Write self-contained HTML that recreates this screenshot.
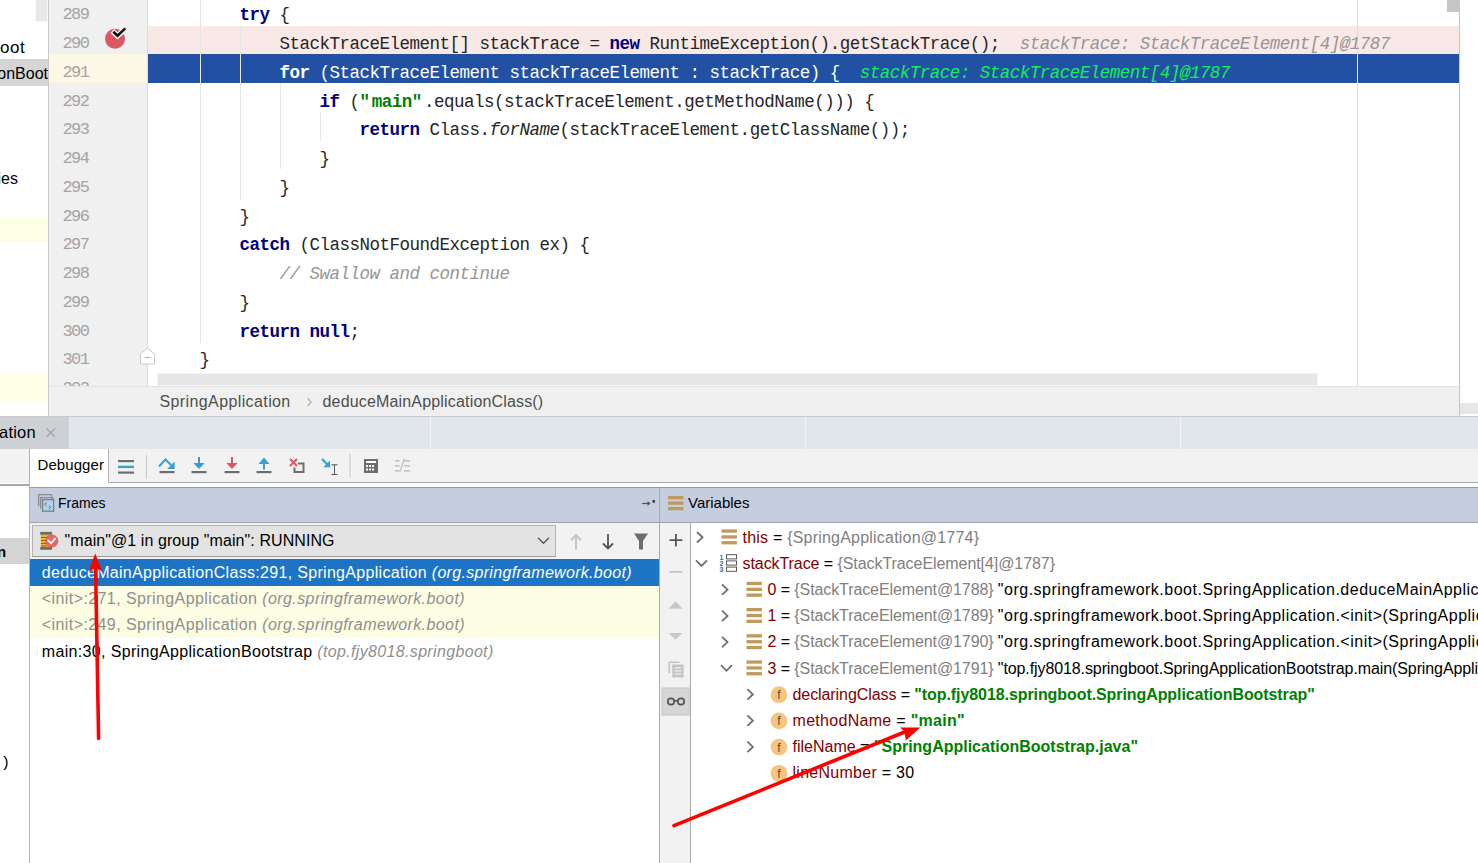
<!DOCTYPE html>
<html><head><meta charset="utf-8">
<style>
*{margin:0;padding:0;box-sizing:border-box}
html,body{width:1478px;height:863px;overflow:hidden;background:#fff;font-family:"Liberation Sans",sans-serif}
.a{position:absolute}
.code{font-family:"Liberation Mono",monospace;font-size:16.67px;white-space:pre;color:#000}
.ln{font-family:"Liberation Mono",monospace;font-size:15px;color:#999;white-space:pre}
.kw{color:#000080;font-weight:bold}
.str{color:#008000;font-weight:bold}
.cm{color:#959595;font-style:italic}
.hint{color:#959595;font-style:italic}
.cl{position:absolute;left:159.5px;height:28.75px;line-height:28.75px;padding-top:4px;font-family:"Liberation Mono",monospace;font-size:17.5px;letter-spacing:-0.5px;white-space:pre;color:#262626}
.cl.sel,.cl.sel b{color:#fff}
.hintg{color:#14ee5a;font-style:italic}
.lnum{position:absolute;left:62.5px;height:28.75px;line-height:28.75px;padding-top:4px;font-family:"Liberation Mono",monospace;font-size:17px;letter-spacing:-1.6px;color:#a4a4a4;white-space:pre}
.ui{font-family:"Liberation Sans",sans-serif;white-space:pre}
</style></head><body>

<!-- left project strip -->
<div class="a" style="left:0;top:0;width:48px;height:416px;background:#fff"></div>
<div class="a" style="left:35px;top:-1px;width:13px;height:22.5px;background:#e8e8e8;border:1px solid #f8f8f8"></div>
<div class="a ui" style="left:0px;top:37.5px;font-size:17px;letter-spacing:0.5px;color:#000">oot</div>
<div class="a" style="left:0;top:59px;width:48px;height:27px;background:#d5d5d5"></div>
<div class="a ui" style="right:1430px;top:65px;font-size:16px;color:#000">ApplicationBoot</div>
<div class="a ui" style="right:1460px;top:170px;font-size:16px;color:#000">Properties</div>
<div class="a" style="left:0;top:217px;width:48px;height:25px;background:#fefee6"></div>
<div class="a" style="left:0;top:373px;width:48px;height:28px;background:#fefee6"></div>

<!-- gutter -->
<div class="a" style="left:48px;top:0;width:1px;height:416px;background:#c9c9c9"></div>
<div class="a" style="left:49px;top:0;width:99px;height:386px;background:#f0f0f0"></div>
<div class="a" style="left:49px;top:54px;width:98px;height:29px;background:#fdf8e3"></div>
<div class="a" style="left:147px;top:0;width:1px;height:386px;background:#dcdcdc"></div>

<!-- editor -->
<div class="a" style="left:148px;top:0;width:1311px;height:386px;background:#fff;overflow:hidden" id="ed">
<div class="a" style="left:0;top:26px;width:1311px;height:28.3px;background:#f9e9e6"></div>
<div class="a" style="left:0;top:54.3px;width:1311px;height:28.5px;background:#2251a4"></div>
<div class="a" style="left:52px;top:0;width:1px;height:343px;background:#e6e6e6"></div>
<div class="a" style="left:92px;top:26px;width:1px;height:174px;background:#e6e6e6"></div>
<div class="a" style="left:132px;top:83px;width:1px;height:86px;background:#e6e6e6"></div>
<div class="a" style="left:172px;top:112px;width:1px;height:29px;background:#e6e6e6"></div>
<div class="a" style="left:52px;top:54.75px;width:1px;height:28.75px;background:#e8ecf4"></div>
<div class="a" style="left:92px;top:54.75px;width:1px;height:28.75px;background:#e8ecf4"></div>
<div class="a" style="left:1209px;top:0;width:1px;height:386px;background:#dddddd"></div>
<div class="a" style="left:1209px;top:54.75px;width:1px;height:28.75px;background:#e8ecf4"></div>
<div class="a" style="left:1299px;top:0;width:12px;height:12px;background:#c6c6c6"></div>
<div class="a" style="left:9px;top:373px;width:1161px;height:13px;background:#e6e6e6;border:1px solid #f4f4f4"></div>
</div>
<div class="a" style="left:0;top:0;width:1478px;height:386px" id="codewrap">
<div class="cl" style="top:-2.75px">        <b class="kw">try</b> {</div>
<div class="lnum" style="top:-2.75px">289</div>
<div class="cl" style="top:26.00px">            StackTraceElement[] stackTrace = <b class="kw">new</b> RuntimeException().getStackTrace();  <i class="hint">stackTrace: StackTraceElement[4]@1787</i></div>
<div class="lnum" style="top:26.00px">290</div>
<div class="cl sel" style="top:54.75px">            <b class="kw">for</b> (StackTraceElement stackTraceElement : stackTrace) {  <i class="hintg">stackTrace: StackTraceElement[4]@1787</i></div>
<div class="lnum" style="top:54.75px">291</div>
<div class="cl" style="top:83.50px">                <b class="kw">if</b> (<b class="str"><span style="letter-spacing:1.75px">"</span>main<span style="letter-spacing:1.75px">"</span></b>.equals(stackTraceElement.getMethodName())) {</div>
<div class="lnum" style="top:83.50px">292</div>
<div class="cl" style="top:112.25px">                    <b class="kw">return</b> Class.<i>forName</i>(stackTraceElement.getClassName());</div>
<div class="lnum" style="top:112.25px">293</div>
<div class="cl" style="top:141.00px">                }</div>
<div class="lnum" style="top:141.00px">294</div>
<div class="cl" style="top:169.75px">            }</div>
<div class="lnum" style="top:169.75px">295</div>
<div class="cl" style="top:198.50px">        }</div>
<div class="lnum" style="top:198.50px">296</div>
<div class="cl" style="top:227.25px">        <b class="kw">catch</b> (ClassNotFoundException ex) {</div>
<div class="lnum" style="top:227.25px">297</div>
<div class="cl" style="top:256.00px">            <i class="cm">// Swallow and continue</i></div>
<div class="lnum" style="top:256.00px">298</div>
<div class="cl" style="top:284.75px">        }</div>
<div class="lnum" style="top:284.75px">299</div>
<div class="cl" style="top:313.50px">        <b class="kw">return</b> <b class="kw">null</b>;</div>
<div class="lnum" style="top:313.50px">300</div>
<div class="cl" style="top:342.25px">    }</div>
<div class="lnum" style="top:342.25px">301</div>
<div class="cl" style="top:371.00px"></div>
<div class="lnum" style="top:371.00px">302</div>
</div>


<svg class="a" style="left:0;top:0" width="1478" height="386" viewBox="0 0 1478 386">
<circle cx="115" cy="38.8" r="10" fill="#db5860"/>
<path d="M112.3 31.1 L117.5 35.9 L126 28" fill="none" stroke="#f2f2f2" stroke-width="5.4" stroke-linejoin="miter" stroke-linecap="butt"/>
<path d="M113.3 31.8 L117.5 35.7 L125.3 28.4" fill="none" stroke="#111" stroke-width="2.6" stroke-linecap="butt"/>
<path d="M147.5 348 L154.5 354 L154.5 364 L140.5 364 L140.5 354 Z" fill="#fff" stroke="#c9c9c9" stroke-width="1"/>
<path d="M144.5 357.5 L150.5 357.5" stroke="#b0b0b0" stroke-width="1"/>
</svg>
<!-- breadcrumb -->
<div class="a" style="left:49px;top:386px;width:1410px;height:30px;background:#f0f0f0;border-top:1px solid #e4e4e4"></div>
<div class="a ui" style="left:159.5px;top:392.26px;font-size:16px;line-height:20px;color:#4e4e4e;letter-spacing:0.39px;">SpringApplication</div>
<svg class="a" style="left:305px;top:396px" width="8" height="12"><path d="M2.5 2 L6 6 L2.5 10" fill="none" stroke="#a0a0a0" stroke-width="1.1"/></svg>
<div class="a ui" style="left:322.5px;top:392.26px;font-size:16px;line-height:20px;color:#4e4e4e;letter-spacing:0.17px;">deduceMainApplicationClass()</div>
<div class="a" style="left:1459px;top:0;width:1px;height:416px;background:#c4c4c4"></div>
<div class="a" style="left:1460px;top:403px;width:18px;height:11px;background:#e6e6e6"></div>
<!-- tabs -->
<div class="a" style="left:49px;top:415px;width:1410px;height:1px;background:#f3f3f3"></div>
<div class="a" style="left:0;top:416px;width:1478px;height:1px;background:#c9c9c9"></div>
<div class="a" style="left:0;top:417px;width:1478px;height:32px;background:#e1e5ec"></div>
<div class="a" style="left:0;top:417px;width:69px;height:32px;background:#cdd0d5"></div>
<div class="a ui" style="left:-1px;top:422.08px;font-size:16.5px;line-height:20px;color:#000;letter-spacing:0.2px;">ation</div>
<svg class="a" style="left:45px;top:427px" width="12" height="12"><path d="M1.5 1.5 L10 10 M10 1.5 L1.5 10" stroke="#a2a2a2" stroke-width="1.2"/></svg>
<div class="a" style="left:430px;top:417px;width:1px;height:32px;background:#f4f5f8"></div>
<div class="a" style="left:1180px;top:417px;width:1px;height:32px;background:#f4f5f8"></div>
<div class="a" style="left:805px;top:417px;width:1px;height:32px;background:#f4f5f8"></div>
<!-- toolbar -->
<div class="a" style="left:0;top:449px;width:1478px;height:34px;background:#f2f2f2"></div>
<div class="a" style="left:0;top:484px;width:29px;height:2px;background:#a8a8a8"></div>
<div class="a" style="left:0;top:486px;width:29px;height:377px;background:#fff"></div>
<div class="a" style="left:30px;top:449px;width:78px;height:38px;background:#fff"></div>
<div class="a" style="left:0;top:538px;width:29px;height:25.5px;background:#d4d4d4"></div>
<div class="a ui" style="left:-3px;top:541.80px;font-size:15px;line-height:20px;color:#000;letter-spacing:0px;font-weight:bold">n</div>
<div class="a ui" style="left:1px;top:753.80px;font-size:15px;line-height:20px;color:#000;letter-spacing:0px;font-family:Liberation Mono">)</div>
<div class="a ui" style="left:37.5px;top:454.80px;font-size:15px;line-height:20px;color:#000;letter-spacing:0.08px;">Debugger</div>
<div class="a" style="left:108px;top:449px;width:1px;height:34px;background:#b4b4b4"></div>
<div class="a" style="left:109px;top:482px;width:1369px;height:1px;background:#a9a9a9"></div>
<div class="a" style="left:109px;top:483px;width:1369px;height:4px;background:#fff"></div>
<div class="a" style="left:29px;top:449px;width:1px;height:414px;background:#b4b4b4"></div>
<svg class="a" style="left:0;top:449px" width="420" height="34" viewBox="0 449 420 34">
<g fill="#6e6e6e"><rect x="118" y="460" width="16" height="2.2"/><rect x="118" y="471.5" width="16" height="2.2"/></g>
<rect x="118" y="465.7" width="16" height="2.4" fill="#389fd6"/>
<rect x="146" y="455" width="1" height="24" fill="#c8c8c8"/>
<g fill="#6e6e6e"><rect x="159.5" y="471" width="15" height="2.2"/><rect x="191.5" y="471" width="15" height="2.2"/><rect x="224.5" y="471" width="15" height="2.2"/><rect x="256.5" y="471" width="15" height="2.2"/></g>
<path d="M159 466.5 L165.5 459.5 L171 465" fill="none" stroke="#389fd6" stroke-width="2"/>
<path d="M174.6 461.5 L174.6 469 L167.2 469 Z" fill="#389fd6"/>
<rect x="198" y="457" width="2" height="7" fill="#389fd6"/><path d="M193.3 463 L204.7 463 L199 469 Z" fill="#389fd6"/>
<rect x="231" y="457" width="2" height="7" fill="#db5860"/><path d="M226.3 463 L237.7 463 L232 469 Z" fill="#db5860"/>
<rect x="263" y="463" width="2" height="6.5" fill="#389fd6"/><path d="M258.5 464 L269.5 464 L264 457.5 Z" fill="#389fd6"/>
<path d="M290 459 L297 466 M297 459 L290 466" stroke="#db5860" stroke-width="2"/>
<path d="M298 463.5 H303.5 V472 H294.5 V467.5" fill="none" stroke="#6e6e6e" stroke-width="2"/>
<path d="M322 459 L328 465" stroke="#389fd6" stroke-width="2.2"/><path d="M330 460.5 L330 467.2 L323.3 467.2 Z" fill="#389fd6"/>
<path d="M331.5 464.8 L337.5 464.8 M334.5 464.8 L334.5 474.5 M331.5 474.5 L337.5 474.5" stroke="#555" stroke-width="1"/>
<rect x="349.5" y="454" width="1" height="24" fill="#c8c8c8"/>
<rect x="364" y="459" width="14" height="14" fill="#6e6e6e"/>
<rect x="366" y="461" width="10" height="2" fill="#fff"/>
<g fill="#fff"><rect x="366" y="465" width="2" height="2"/><rect x="369" y="465" width="2" height="2"/><rect x="372" y="465" width="2" height="2"/><rect x="366" y="468.5" width="2" height="2"/><rect x="369" y="468.5" width="2" height="2"/><rect x="372" y="468.5" width="2" height="2"/></g>
<g fill="#c2c2c2"><rect x="395" y="460" width="4.5" height="1.6"/><rect x="395" y="465" width="4.5" height="1.6"/><rect x="395" y="470" width="4.5" height="1.6"/><rect x="404" y="460" width="6" height="1.6"/><rect x="404" y="465" width="6" height="1.6"/><rect x="404" y="470" width="6" height="1.6"/></g>
<path d="M400 472 L404 459" stroke="#c2c2c2" stroke-width="1.2"/>
</svg>
<!-- panel headers -->
<div class="a" style="left:30px;top:487px;width:1448px;height:1px;background:#9c9c9c"></div>
<div class="a" style="left:30px;top:488px;width:1448px;height:34px;background:#c5cedf"></div>
<div class="a" style="left:30px;top:522px;width:1448px;height:1px;background:#a2a2a2"></div>
<div class="a ui" style="left:58px;top:493.15px;font-size:14px;line-height:20px;color:#000;letter-spacing:0px;">Frames</div>
<div class="a ui" style="left:688px;top:492.60px;font-size:15px;line-height:20px;color:#000;letter-spacing:0px;">Variables</div>
<div class="a" style="left:659px;top:487px;width:1px;height:376px;background:#a9a9a9"></div>
<svg class="a" style="left:0;top:487px" width="700" height="36" viewBox="0 487 700 36">
<path d="M38.6 506 V494.7 H51.5 V497" fill="none" stroke="#8c8c8c" stroke-width="1.3"/>
<path d="M40.6 508.5 V497.7 H52.7 V499.5" fill="none" stroke="#8c8c8c" stroke-width="1.3"/>
<rect x="42.6" y="499.6" width="11" height="11.6" fill="#acd6f0" stroke="#7e7e7e" stroke-width="1.3"/>
<path d="M46.6 502.6 L44.6 504.2 L46.6 505.8 M48.8 505.8 L50.8 507.4 L48.8 509" fill="none" stroke="#666" stroke-width="0.9"/>
<path d="M642 503.5 L650 503.5" stroke="#555" stroke-width="1.2"/><path d="M650.5 503.5 L647.5 501 L647.5 506 Z" fill="#555"/>
<rect x="652.5" y="500" width="2.5" height="2.8" fill="#444"/>
<g fill="#c19a5b"><rect x="668" y="496" width="15.5" height="3.3"/><rect x="668" y="501.5" width="15.5" height="3.3"/><rect x="668" y="507" width="15.5" height="3.3"/></g>
</svg>
<!-- frames -->
<div class="a" style="left:30px;top:523px;width:629px;height:36px;background:#f2f2f2"></div>
<div class="a" style="left:31.5px;top:524.5px;width:524px;height:32.5px;background:#e3e3e3;border:1px solid #b4b4b4;border-bottom-color:#9a9a9a"></div>
<svg class="a" style="left:36px;top:528px" width="620" height="28" viewBox="36 528 620 28">
<rect x="40.8" y="534" width="10" height="13.5" fill="#f0b43c"/>
<g stroke="#8a5a10" stroke-width="0.9"><path d="M41 537.5 H47 M41 540.5 H47 M41 543.5 H47 M41 546 H47"/></g>
<rect x="40.2" y="531.9" width="11.8" height="2.8" fill="#6e6e6e"/><rect x="40.2" y="547" width="11.8" height="2.8" fill="#6e6e6e"/>
<circle cx="51.8" cy="541" r="6.2" fill="#e36b68" stroke="#d9534f" stroke-width="0.6"/>
<path d="M47.6 539.9 L51.1 543.3 L55.5 538.1" fill="none" stroke="#fff" stroke-width="1.7"/>
<path d="M538 537.8 L543.5 543.3 L549 537.8" fill="none" stroke="#555" stroke-width="1.3"/>
<path d="M576 535 V549.5 M571 540 L576 535 L581 540" fill="none" stroke="#c2c2c2" stroke-width="1.8"/>
<path d="M608 534 V548.5 M603 543.5 L608 548.5 L613 543.5" fill="none" stroke="#555" stroke-width="1.8"/>
<path d="M634 533.5 H648 L643 541 V549.5 H639 V541 Z" fill="#6e6e6e"/>
</svg>
<div class="a ui" style="left:64.5px;top:530.96px;font-size:16px;line-height:20px;color:#000;letter-spacing:0.08px;">"main"@1 in group "main": RUNNING</div>
<div class="a" style="left:30px;top:559px;width:629px;height:27px;background:#1e74c4"></div>
<div class="a ui" style="left:41.8px;top:563.06px;font-size:16px;line-height:20px;color:#fff;letter-spacing:0.31px;">deduceMainApplicationClass:291, SpringApplication <i>(org.springframework.boot)</i></div>
<div class="a" style="left:30px;top:586px;width:629px;height:52px;background:#fdfde4"></div>
<div class="a ui" style="left:41.8px;top:589.26px;font-size:16px;line-height:20px;color:#8f8f8f;letter-spacing:0.41px;">&lt;init&gt;:271, SpringApplication <i>(org.springframework.boot)</i></div>
<div class="a ui" style="left:41.8px;top:615.36px;font-size:16px;line-height:20px;color:#8f8f8f;letter-spacing:0.41px;">&lt;init&gt;:249, SpringApplication <i>(org.springframework.boot)</i></div>
<div class="a ui" style="left:41.8px;top:641.86px;font-size:16px;line-height:20px;color:#000;letter-spacing:0.34px;">main:30, SpringApplicationBootstrap <i style="color:#8f8f8f">(top.fjy8018.springboot)</i></div>
<!-- variables -->
<div class="a" style="left:660px;top:523px;width:30px;height:340px;background:#f2f2f2"></div>
<div class="a" style="left:690px;top:523px;width:1px;height:340px;background:#aaaaaa"></div>
<div class="a" style="left:691px;top:523px;width:787px;height:340px;background:#fff"></div>
<svg class="a" style="left:660px;top:523px" width="30" height="200" viewBox="660 523 30 200">
<path d="M669.5 540.2 H682.3 M675.9 533.9 V546.5" stroke="#555" stroke-width="1.8"/>
<path d="M669.5 571.8 H682.3" stroke="#c0c0c0" stroke-width="1.6"/>
<path d="M668.5 608.8 L675.6 601.3 L682.7 608.8 Z" fill="#c8c8c8"/>
<path d="M668.5 633 L675.5 639.5 L682.5 633 Z" fill="#c8c8c8"/>
<path d="M669.3 673 V662.3 H679.5" fill="none" stroke="#c4c4c4" stroke-width="1.6"/>
<rect x="672.3" y="664.5" width="11.3" height="12.9" fill="#c4c4c4"/>
<g fill="#f2f2f2"><rect x="674.5" y="667.3" width="7" height="1.2"/><rect x="674.5" y="670.3" width="7" height="1.2"/><rect x="674.5" y="673.3" width="7" height="1.2"/></g>
<rect x="662" y="688" width="27" height="27" fill="#d6d6d6" stroke="#c4c4c4"/>
<g fill="none" stroke="#555" stroke-width="1.7"><circle cx="671" cy="701.5" r="3.2"/><circle cx="681" cy="701.5" r="3.2"/><path d="M674.2 700.8 H677.8"/></g>
</svg>
<div class="a ui" style="left:742.5px;top:527.66px;font-size:16px;line-height:20px;color:#000;letter-spacing:0.21px;"><span style="color:#800000">this</span> = <span style="color:#808080">{SpringApplication@1774}</span></div>
<div class="a ui" style="left:742.5px;top:553.86px;font-size:16px;line-height:20px;color:#000;letter-spacing:-0.07px;"><span style="color:#800000">stackTrace</span> = <span style="color:#808080">{StackTraceElement[4]@1787}</span></div>
<div class="a ui" style="left:767.6px;top:580.06px;font-size:16px;line-height:20px;color:#000;letter-spacing:-0.1px;"><span style="color:#800000">0</span> = <span style="color:#808080">{StackTraceElement@1788}</span> <span style="letter-spacing:0.5px">"org.springframework.boot.SpringApplication.deduceMainApplicationClass(SpringApplication.java:291)"</span></div>
<div class="a ui" style="left:767.6px;top:606.26px;font-size:16px;line-height:20px;color:#000;letter-spacing:-0.1px;"><span style="color:#800000">1</span> = <span style="color:#808080">{StackTraceElement@1789}</span> <span style="letter-spacing:0.5px">"org.springframework.boot.SpringApplication.&lt;init&gt;(SpringApplication.java:271)"</span></div>
<div class="a ui" style="left:767.6px;top:632.46px;font-size:16px;line-height:20px;color:#000;letter-spacing:-0.1px;"><span style="color:#800000">2</span> = <span style="color:#808080">{StackTraceElement@1790}</span> <span style="letter-spacing:0.5px">"org.springframework.boot.SpringApplication.&lt;init&gt;(SpringApplication.java:249)"</span></div>
<div class="a ui" style="left:767.6px;top:658.66px;font-size:16px;line-height:20px;color:#000;letter-spacing:-0.1px;"><span style="color:#800000">3</span> = <span style="color:#808080">{StackTraceElement@1791}</span> "top.fjy8018.springboot.SpringApplicationBootstrap.main(SpringApplicationBootstrap.java:30)"</div>
<div class="a ui" style="left:792.5px;top:684.86px;font-size:16px;line-height:20px;color:#000;letter-spacing:-0.08px;"><span style="color:#800000">declaringClass</span> = <b style="color:#008000">"top.fjy8018.springboot.SpringApplicationBootstrap"</b></div>
<div class="a ui" style="left:792.5px;top:711.06px;font-size:16px;line-height:20px;color:#000;letter-spacing:0.3px;"><span style="color:#800000">methodName</span> = <b style="color:#008000">"main"</b></div>
<div class="a ui" style="left:792.5px;top:737.26px;font-size:16px;line-height:20px;color:#000;letter-spacing:0.0px;"><span style="color:#800000">fileName</span> = <b style="color:#008000">"SpringApplicationBootstrap.java"</b></div>
<div class="a ui" style="left:792.5px;top:763.46px;font-size:16px;line-height:20px;color:#000;letter-spacing:0.27px;"><span style="color:#800000">lineNumber</span> = 30</div>
<svg class="a" style="left:691px;top:523px" width="787" height="340" viewBox="691 523 787 340">
<path d="M697.0 532.0 L702.5 537.3 L697.0 542.5" fill="none" stroke="#6e6e6e" stroke-width="1.8"/>
<g fill="#c19a5b"><rect x="721.5" y="529.4" width="15.4" height="3.3"/><rect x="721.5" y="535.3" width="15.4" height="3.3"/><rect x="721.5" y="541.1" width="15.4" height="3.3"/></g>
<path d="M696.0 560.4 L701.5 566.0 L707.0 560.4" fill="none" stroke="#6e6e6e" stroke-width="1.8"/>
<g fill="#fff" stroke="#5a5a5a" stroke-width="1"><rect x="726.5" y="554.7" width="10" height="4.2"/><rect x="726.5" y="560.9" width="10" height="4.2"/><rect x="726.5" y="567.1" width="10" height="4.2"/></g>
<text x="719.5" y="559.7" font-family="Liberation Sans" font-size="7" font-weight="bold" fill="#2d6e9e">1</text><text x="719.5" y="565.7" font-family="Liberation Sans" font-size="7" font-weight="bold" fill="#2d6e9e">2</text><text x="719.5" y="571.7" font-family="Liberation Sans" font-size="7" font-weight="bold" fill="#2d6e9e">3</text>
<path d="M722.0 584.4 L727.5 589.7 L722.0 594.9" fill="none" stroke="#6e6e6e" stroke-width="1.8"/>
<g fill="#c19a5b"><rect x="746.5" y="581.8" width="15.4" height="3.3"/><rect x="746.5" y="587.7" width="15.4" height="3.3"/><rect x="746.5" y="593.5" width="15.4" height="3.3"/></g>
<path d="M722.0 610.6 L727.5 615.9 L722.0 621.1" fill="none" stroke="#6e6e6e" stroke-width="1.8"/>
<g fill="#c19a5b"><rect x="746.5" y="608.0" width="15.4" height="3.3"/><rect x="746.5" y="613.9" width="15.4" height="3.3"/><rect x="746.5" y="619.7" width="15.4" height="3.3"/></g>
<path d="M722.0 636.8 L727.5 642.1 L722.0 647.3" fill="none" stroke="#6e6e6e" stroke-width="1.8"/>
<g fill="#c19a5b"><rect x="746.5" y="634.2" width="15.4" height="3.3"/><rect x="746.5" y="640.1" width="15.4" height="3.3"/><rect x="746.5" y="645.9" width="15.4" height="3.3"/></g>
<path d="M721.0 665.2 L726.5 670.8 L732.0 665.2" fill="none" stroke="#6e6e6e" stroke-width="1.8"/>
<g fill="#c19a5b"><rect x="746.5" y="660.4" width="15.4" height="3.3"/><rect x="746.5" y="666.3" width="15.4" height="3.3"/><rect x="746.5" y="672.1" width="15.4" height="3.3"/></g>
<path d="M747.4 689.2 L752.9 694.5 L747.4 699.7" fill="none" stroke="#6e6e6e" stroke-width="1.8"/>
<circle cx="779.0" cy="694.7" r="8.4" fill="#f4c57e"/>
<text x="779.0" y="699.2" text-anchor="middle" font-family="Liberation Sans" font-size="12" fill="#5a4a30">f</text>
<path d="M747.4 715.4 L752.9 720.7 L747.4 725.9" fill="none" stroke="#6e6e6e" stroke-width="1.8"/>
<circle cx="779.0" cy="720.9" r="8.4" fill="#f4c57e"/>
<text x="779.0" y="725.4" text-anchor="middle" font-family="Liberation Sans" font-size="12" fill="#5a4a30">f</text>
<path d="M747.4 741.6 L752.9 746.9 L747.4 752.1" fill="none" stroke="#6e6e6e" stroke-width="1.8"/>
<circle cx="779.0" cy="747.1" r="8.4" fill="#f4c57e"/>
<text x="779.0" y="751.6" text-anchor="middle" font-family="Liberation Sans" font-size="12" fill="#5a4a30">f</text>
<circle cx="779.0" cy="773.3" r="8.4" fill="#f4c57e"/>
<text x="779.0" y="777.8" text-anchor="middle" font-family="Liberation Sans" font-size="12" fill="#5a4a30">f</text>
</svg>
<!-- annotations -->
<svg class="a" style="left:0;top:0" width="1478" height="863" viewBox="0 0 1478 863">
<path d="M95.6 568 L98.6 738.5" stroke="#ff0000" stroke-width="3.6" stroke-linecap="round"/>
<path d="M95.2 553.6 L102.6 571.8 L95.8 568 L88.6 571.6 Z" fill="#ff0000"/>
<path d="M674 825.6 L906 731.5" stroke="#ff0000" stroke-width="3.6" stroke-linecap="round"/>
<path d="M920.4 727.4 L905.8 740.6 L904.6 731.8 L900.1 727.6 Z" fill="#ff0000"/>
</svg>
</body></html>
